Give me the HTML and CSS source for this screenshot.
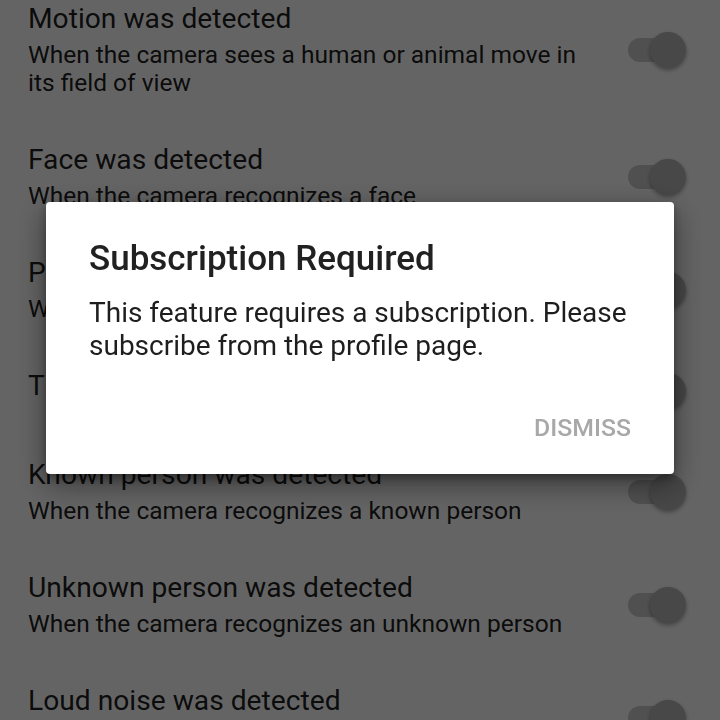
FILE: index.html
```html
<!DOCTYPE html>
<html>
<head>
<meta charset="utf-8">
<link rel="stylesheet" href="styles.css">
</head>
<body>
<div class="list">
  <div class="row">
    <div class="text">
      <div class="title">Motion was detected</div>
      <div class="sub">When the camera sees a human or animal move in its field of view</div>
    </div>
    <div class="switch"><span class="track"></span><span class="thumb"></span></div>
  </div>
  <div class="row">
    <div class="text">
      <div class="title">Face was detected</div>
      <div class="sub">When the camera recognizes a face</div>
    </div>
    <div class="switch"><span class="track"></span><span class="thumb"></span></div>
  </div>
  <div class="row">
    <div class="text">
      <div class="title">Person was detected</div>
      <div class="sub">When the camera sees a person</div>
    </div>
    <div class="switch"><span class="track"></span><span class="thumb"></span></div>
  </div>
  <div class="row single">
    <div class="text">
      <div class="title">The camera was moved</div>
    </div>
    <div class="switch"><span class="track"></span><span class="thumb"></span></div>
  </div>
  <div class="row">
    <div class="text">
      <div class="title">Known person was detected</div>
      <div class="sub">When the camera recognizes a known person</div>
    </div>
    <div class="switch"><span class="track"></span><span class="thumb"></span></div>
  </div>
  <div class="row">
    <div class="text">
      <div class="title">Unknown person was detected</div>
      <div class="sub">When the camera recognizes an unknown person</div>
    </div>
    <div class="switch"><span class="track"></span><span class="thumb"></span></div>
  </div>
  <div class="row">
    <div class="text">
      <div class="title">Loud noise was detected</div>
      <div class="sub">When the camera hears a loud noise</div>
    </div>
    <div class="switch"><span class="track"></span><span class="thumb"></span></div>
  </div>
</div>

<div class="scrim">
  <div class="dialog">
    <div class="dialog-title">Subscription Required</div>
    <div class="dialog-body">This feature requires a subscription. Please subscribe from the profile page.</div>
    <div class="dialog-actions"><span class="btn">DISMISS</span></div>
  </div>
</div>
</body>
</html>
```

FILE: styles.css
```css
html, body {
  margin: 0;
  padding: 0;
  background: #fafafa;
  font-family: Roboto, "Noto Sans", sans-serif;
  overflow: hidden;
  height: 720px;
}

.list {
  margin-top: -21px;
}

.row {
  display: flex;
  align-items: center;
  padding: 0 34px 0 28px;
}

.text {
  flex: 1;
  padding: 23px 0;
  min-width: 0;
}

.row.single .text {
  padding: 23px 0 32px;
}

.title {
  font-size: 28.2px;
  line-height: 34px;
  color: rgba(0, 0, 0, 0.9);
}

.sub {
  margin-top: 5px;
  font-size: 24.5px;
  line-height: 28px;
  color: rgba(0, 0, 0, 0.9);
  max-width: 560px;
}

.switch {
  position: relative;
  width: 58px;
  height: 36px;
  margin-left: 20px;
  flex: none;
}

.track {
  position: absolute;
  left: 0;
  top: 6px;
  width: 54px;
  height: 24px;
  border-radius: 12px;
  background: #c8c8c8;
}

.thumb {
  position: absolute;
  right: 0;
  top: 0;
  width: 36px;
  height: 36px;
  border-radius: 50%;
  background: #b3b3b3;
  box-shadow: 0 2px 4px rgba(0, 0, 0, 0.35);
}

.scrim {
  position: fixed;
  inset: 0;
  background: rgba(0, 0, 0, 0.6);
  display: flex;
  align-items: center;
  justify-content: center;
  padding-bottom: 44px;
  box-sizing: border-box;
}

.dialog {
  width: 628px;
  height: 272px;
  box-sizing: border-box;
  background: #fff;
  border-radius: 4px;
  box-shadow: 0 10px 30px rgba(0, 0, 0, 0.45), 0 4px 10px rgba(0, 0, 0, 0.3);
  padding: 37px 43px 0;
  display: flex;
  flex-direction: column;
}

.dialog-title {
  font-size: 35px;
  line-height: 40px;
  font-weight: 500;
  color: #212121;
}

.dialog-body {
  margin-top: 17px;
  font-size: 28px;
  line-height: 33px;
  color: #1e1e1e;
}

.dialog-actions {
  margin-top: 52px;
  display: flex;
  justify-content: flex-end;
}

.btn {
  font-size: 24.8px;
  line-height: 28px;
  font-weight: 500;
  color: #a8a8a8;
}
```
